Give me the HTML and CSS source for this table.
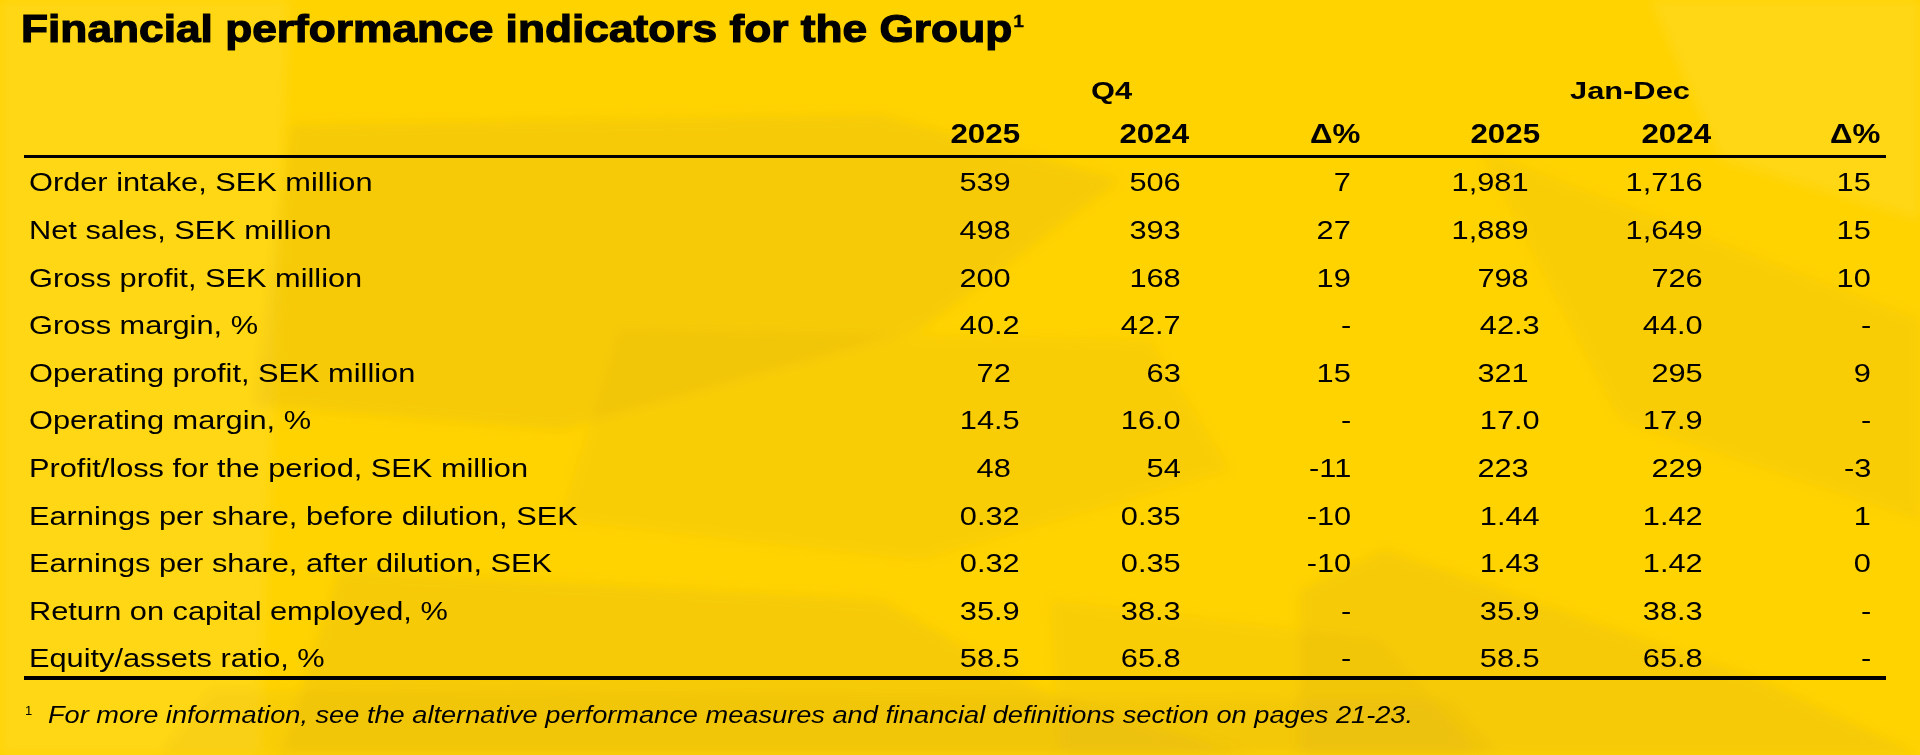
FILE: index.html
```html
<!DOCTYPE html>
<html lang="en">
<head>
<meta charset="utf-8">
<title>Financial performance indicators for the Group</title>
<link rel="stylesheet" href="styles.css">
</head>
<body>
<div class="page">
  <svg class="bg" viewBox="0 0 1920 755" preserveAspectRatio="none" aria-hidden="true">
    <defs>
      <filter id="soft" x="-10%" y="-10%" width="120%" height="120%">
        <feGaussianBlur stdDeviation="6"/>
      </filter>
    </defs>
    <g filter="url(#soft)">
      <polygon class="lt" points="0,0 290,0 260,755 0,755"/>
      <polygon class="lt" points="1650,0 1920,0 1920,220 1720,160"/>
      <polygon class="dk" points="290,125 880,115 1120,180 920,330 560,430 255,405"/>
      <polygon class="dk2" points="620,330 1150,340 1230,470 920,560 560,520"/>
      <polygon class="dk" points="340,570 880,600 1060,700 1250,755 280,755"/>
      <polygon class="dk2" points="1050,600 1380,640 1480,755 1060,755"/>
      <polygon class="dk" points="1300,590 1385,550 1760,680 1920,755 1300,755"/>
      <polygon class="dk2" points="210,690 1450,700 1500,755 160,755"/>
      <polygon class="dk2" points="1480,150 1920,320 1920,520 1620,420"/>
    </g>
  </svg>

  <h1 class="title"><span class="t-in">Financial performance indicators for the Group<span class="t-sup">1</span></span></h1>

  <div class="table">
    <div class="grid group">
      <div class="g g-q4"><span class="sg">Q4</span></div>
      <div class="g g-jd"><span class="sg">Jan-Dec</span></div>
    </div>
    <div class="grid years">
      <div></div>
      <div class="h"><span class="sh">2025</span></div>
      <div class="h"><span class="sh">2024</span></div>
      <div class="h"><span class="sh">Δ%</span></div>
      <div class="h"><span class="sh">2025</span></div>
      <div class="h"><span class="sh">2024</span></div>
      <div class="h"><span class="sh">Δ%</span></div>
      <div></div>
    </div>
    <div class="rule top"></div>

    <div class="grid row">
      <div class="l"><span class="sl">Order intake, SEK million</span></div>
      <div class="v c1"><span class="sv">539</span></div>
      <div class="v c2"><span class="sv">506</span></div>
      <div class="v c3"><span class="sv">7</span></div>
      <div class="v c4"><span class="sv">1,981</span></div>
      <div class="v c5"><span class="sv">1,716</span></div>
      <div class="v c6"><span class="sv">15</span></div>
      <div></div>
    </div>
    <div class="grid row">
      <div class="l"><span class="sl">Net sales, SEK million</span></div>
      <div class="v c1"><span class="sv">498</span></div>
      <div class="v c2"><span class="sv">393</span></div>
      <div class="v c3"><span class="sv">27</span></div>
      <div class="v c4"><span class="sv">1,889</span></div>
      <div class="v c5"><span class="sv">1,649</span></div>
      <div class="v c6"><span class="sv">15</span></div>
      <div></div>
    </div>
    <div class="grid row">
      <div class="l"><span class="sl">Gross profit, SEK million</span></div>
      <div class="v c1"><span class="sv">200</span></div>
      <div class="v c2"><span class="sv">168</span></div>
      <div class="v c3"><span class="sv">19</span></div>
      <div class="v c4"><span class="sv">798</span></div>
      <div class="v c5"><span class="sv">726</span></div>
      <div class="v c6"><span class="sv">10</span></div>
      <div></div>
    </div>
    <div class="grid row">
      <div class="l"><span class="sl">Gross margin, %</span></div>
      <div class="v c1 d"><span class="sv">40.2</span></div>
      <div class="v c2"><span class="sv">42.7</span></div>
      <div class="v c3"><span class="sv">-</span></div>
      <div class="v c4 d"><span class="sv">42.3</span></div>
      <div class="v c5"><span class="sv">44.0</span></div>
      <div class="v c6"><span class="sv">-</span></div>
      <div></div>
    </div>
    <div class="grid row">
      <div class="l"><span class="sl">Operating profit, SEK million</span></div>
      <div class="v c1"><span class="sv">72</span></div>
      <div class="v c2"><span class="sv">63</span></div>
      <div class="v c3"><span class="sv">15</span></div>
      <div class="v c4"><span class="sv">321</span></div>
      <div class="v c5"><span class="sv">295</span></div>
      <div class="v c6"><span class="sv">9</span></div>
      <div></div>
    </div>
    <div class="grid row">
      <div class="l"><span class="sl">Operating margin, %</span></div>
      <div class="v c1 d"><span class="sv">14.5</span></div>
      <div class="v c2"><span class="sv">16.0</span></div>
      <div class="v c3"><span class="sv">-</span></div>
      <div class="v c4 d"><span class="sv">17.0</span></div>
      <div class="v c5"><span class="sv">17.9</span></div>
      <div class="v c6"><span class="sv">-</span></div>
      <div></div>
    </div>
    <div class="grid row">
      <div class="l"><span class="sl">Profit/loss for the period, SEK million</span></div>
      <div class="v c1"><span class="sv">48</span></div>
      <div class="v c2"><span class="sv">54</span></div>
      <div class="v c3"><span class="sv">-11</span></div>
      <div class="v c4"><span class="sv">223</span></div>
      <div class="v c5"><span class="sv">229</span></div>
      <div class="v c6"><span class="sv">-3</span></div>
      <div></div>
    </div>
    <div class="grid row">
      <div class="l"><span class="sl">Earnings per share, before dilution, SEK</span></div>
      <div class="v c1 d"><span class="sv">0.32</span></div>
      <div class="v c2"><span class="sv">0.35</span></div>
      <div class="v c3"><span class="sv">-10</span></div>
      <div class="v c4 d"><span class="sv">1.44</span></div>
      <div class="v c5"><span class="sv">1.42</span></div>
      <div class="v c6"><span class="sv">1</span></div>
      <div></div>
    </div>
    <div class="grid row">
      <div class="l"><span class="sl">Earnings per share, after dilution, SEK</span></div>
      <div class="v c1 d"><span class="sv">0.32</span></div>
      <div class="v c2"><span class="sv">0.35</span></div>
      <div class="v c3"><span class="sv">-10</span></div>
      <div class="v c4 d"><span class="sv">1.43</span></div>
      <div class="v c5"><span class="sv">1.42</span></div>
      <div class="v c6"><span class="sv">0</span></div>
      <div></div>
    </div>
    <div class="grid row">
      <div class="l"><span class="sl">Return on capital employed, %</span></div>
      <div class="v c1 d"><span class="sv">35.9</span></div>
      <div class="v c2"><span class="sv">38.3</span></div>
      <div class="v c3"><span class="sv">-</span></div>
      <div class="v c4 d"><span class="sv">35.9</span></div>
      <div class="v c5"><span class="sv">38.3</span></div>
      <div class="v c6"><span class="sv">-</span></div>
      <div></div>
    </div>
    <div class="grid row last">
      <div class="l"><span class="sl">Equity/assets ratio, %</span></div>
      <div class="v c1 d"><span class="sv">58.5</span></div>
      <div class="v c2"><span class="sv">65.8</span></div>
      <div class="v c3"><span class="sv">-</span></div>
      <div class="v c4 d"><span class="sv">58.5</span></div>
      <div class="v c5"><span class="sv">65.8</span></div>
      <div class="v c6"><span class="sv">-</span></div>
      <div></div>
    </div>
    <div class="rule bottom"></div>
  </div>

  <p class="foot"><span class="f-sup">1</span><span class="f-txt">For more information, see the alternative performance measures and financial definitions section on pages 21-23.</span></p>
</div>
</body>
</html>
```

FILE: styles.css
```css
html, body {
  margin: 0;
  padding: 0;
}

body {
  background: #ffd300;
  color: #000;
  font-family: "Liberation Sans", Arial, sans-serif;
  overflow: hidden;
}

.page {
  position: relative;
  width: 1920px;
  height: 755px;
  overflow: hidden;
}

.bg {
  position: absolute;
  left: 0;
  top: 0;
  width: 1920px;
  height: 755px;
  z-index: 0;
}

.bg .dk { fill: #c99a2c; opacity: 0.16; }
.bg .dk2 { fill: #c99a2c; opacity: 0.10; }
.bg .lt { fill: #ffdc2a; opacity: 0.45; }

.title, .table, .foot {
  position: relative;
  z-index: 1;
}

/* Title */
.title {
  margin: 0;
  padding: 5px 0 0 21px;
  font-size: 39px;
  line-height: 48px;
  font-weight: 700;
  white-space: nowrap;
}

.t-in {
  display: inline-block;
  transform: scaleX(1.135);
  transform-origin: left center;
  -webkit-text-stroke: 1.2px #000;
}

.t-sup {
  font-size: 17px;
  line-height: 1;
  vertical-align: 15px;
  margin-left: 1px;
  -webkit-text-stroke: 0.3px #000;
}

/* Table */
.table {
  margin-left: 24px;
  width: 1862px;
}

.grid {
  display: grid;
  grid-template-columns: 856px 140px 169px 171px 180px 171px 169px 6px;
}

.group {
  margin-top: 23px;
  font-size: 23px;
  line-height: 30px;
  font-weight: 700;
  white-space: nowrap;
}

.g-q4 {
  grid-column: 2 / span 3;
  padding-left: 211px;
}

.g-jd {
  grid-column: 5 / span 3;
  padding-left: 210px;
}

.sg {
  display: inline-block;
  transform: scaleX(1.34);
  transform-origin: left center;
}

.years {
  margin-top: 11px;
  font-size: 27px;
  line-height: 34px;
  font-weight: 700;
}

.h {
  text-align: right;
}

.sh {
  display: inline-block;
  transform: scaleX(1.16);
  transform-origin: right center;
}

.rule {
  background: #000;
}

.rule.top {
  margin-top: 4px;
  height: 3px;
  margin-bottom: 1.4px;
}

.rule.bottom {
  height: 4px;
}

.row {
  font-size: 25px;
  line-height: 47.6px;
  height: 47.6px;
  white-space: nowrap;
}

.row.last {
  height: 40.6px;
}

.l {
  padding-left: 5px;
}

.sl {
  display: inline-block;
  transform: scaleX(1.23);
  transform-origin: left center;
}

.v {
  text-align: right;
}

.sv {
  display: inline-block;
  transform: scaleX(1.23);
  transform-origin: right center;
}

.c1 { padding-right: 9px; }
.c1.d { padding-right: 0; }
.c2 { padding-right: 8px; }
.c3 { padding-right: 9px; }
.c4 { padding-right: 11px; }
.c4.d { padding-right: 0; }
.c5 { padding-right: 8px; }
.c6 { padding-right: 9px; }

/* Footnote */
.foot {
  margin: 19.6px 0 0 0;
  padding-left: 25px;
  font-size: 24.5px;
  line-height: 30px;
  white-space: nowrap;
}

.f-sup {
  display: inline-block;
  width: 23px;
  font-size: 13px;
  line-height: 1;
  vertical-align: 8px;
}

.f-txt {
  display: inline-block;
  font-style: italic;
  transform: scaleX(1.11);
  transform-origin: left center;
}
```
